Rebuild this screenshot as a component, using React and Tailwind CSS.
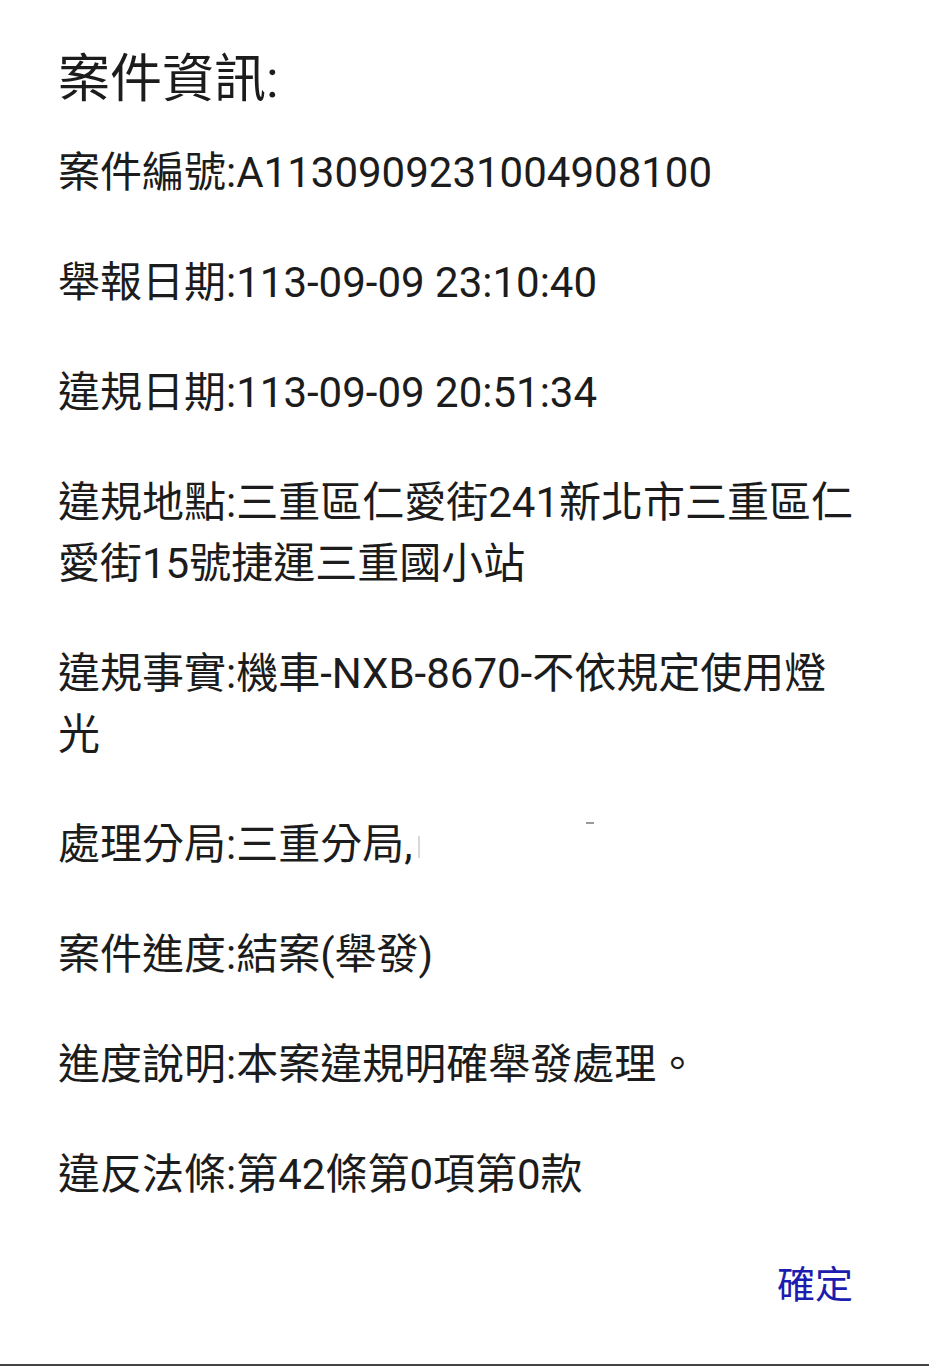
const items = [
  '案件編號:A1130909231004908100',
  '舉報日期:113-09-09 23:10:40',
  '違規日期:113-09-09 20:51:34',
  '違規地點:三重區仁愛街241新北市三重區仁愛街15號捷運三重國小站',
  '違規事實:機車-NXB-8670-不依規定使用燈光',
]

const items2 = [
  '案件進度:結案(舉發)',
  '進度說明:本案違規明確舉發處理。',
  '違反法條:第42條第0項第0款',
]

export default function App() {
  return (
    <div
      className="flex h-[1366px] w-[929px] flex-col bg-white text-[#1c1c1c]"
      style={{ fontFamily: 'Roboto, "Noto Sans CJK TC", sans-serif' }}
    >
      <div className="pl-[58px] pr-[68px] pt-[50px]">
        <h1 className="text-[52px] leading-[60px]">案件資訊:</h1>
        <div className="mt-[32px] flex flex-col gap-[49px] text-[42px] leading-[61px]">
          {items.map((t) => (
            <p key={t}>{t}</p>
          ))}
          <p className="relative">
            處理分局:三重分局,
            <span className="absolute left-[360px] top-[22px] h-[22px] w-[2px] bg-[#d8d8d8]"></span>
            <span className="absolute left-[528px] top-[8px] h-[2px] w-[8px] bg-[#9a9a9a]"></span>
          </p>
          {items2.map((t) => (
            <p key={t}>{t}</p>
          ))}
        </div>
        <div className="mt-[55px] flex justify-end pr-[8px]">
          <button className="text-[38px] leading-[50px] text-[#1c1cae]">確定</button>
        </div>
      </div>
      <div className="mt-auto h-[2px] w-full bg-[#444444]"></div>
    </div>
  )
}
